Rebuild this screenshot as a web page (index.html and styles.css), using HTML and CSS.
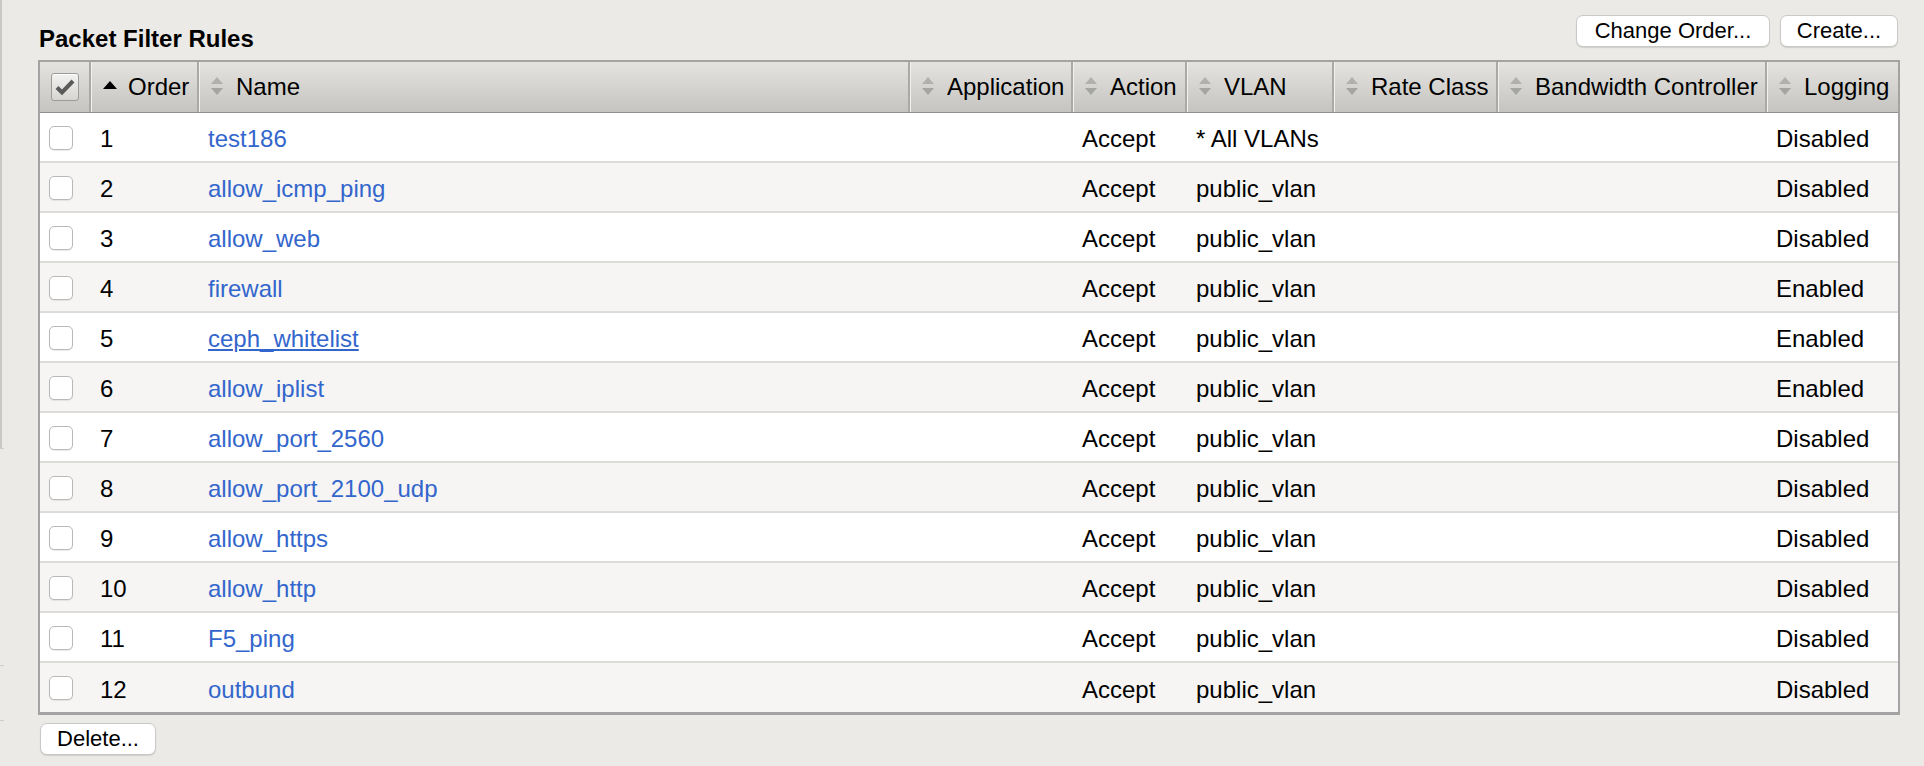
FILE: index.html
```html
<!DOCTYPE html>
<html>
<head>
<meta charset="utf-8">
<link rel="stylesheet" href="styles.css">
</head>
<body>
<div class="page">
  <div class="topbar">
    <h1 class="title">Packet Filter Rules</h1>
    <div class="actions">
      <button class="btn btn-order">Change Order...</button>
      <button class="btn btn-create">Create...</button>
    </div>
  </div>
  <div class="grid">
    <div class="row head">
      <div class="hc hc-chk"><span class="hbox"><svg width="20" height="18" viewBox="0 0 20 18"><path d="M2 9.5 L7 14.5 L18 3" fill="none" stroke="#5a5a5a" stroke-width="4" stroke-linejoin="miter"/></svg></span></div>
      <div class="hc"><span class="asc"></span><span>Order</span></div>
      <div class="hc"><span class="sort"></span><span>Name</span></div>
      <div class="hc"><span class="sort"></span><span>Application</span></div>
      <div class="hc"><span class="sort"></span><span>Action</span></div>
      <div class="hc"><span class="sort"></span><span>VLAN</span></div>
      <div class="hc"><span class="sort"></span><span>Rate Class</span></div>
      <div class="hc"><span class="sort"></span><span>Bandwidth Controller</span></div>
      <div class="hc hc-last"><span class="sort"></span><span>Logging</span></div>
    </div>
    <div class="row"><div class="c"><span class="cb"></span></div><div class="c">1</div><div class="c"><a class="lnk">test186</a></div><div class="c"></div><div class="c">Accept</div><div class="c">* All VLANs</div><div class="c"></div><div class="c"></div><div class="c">Disabled</div></div>
    <div class="row alt"><div class="c"><span class="cb"></span></div><div class="c">2</div><div class="c"><a class="lnk">allow_icmp_ping</a></div><div class="c"></div><div class="c">Accept</div><div class="c">public_vlan</div><div class="c"></div><div class="c"></div><div class="c">Disabled</div></div>
    <div class="row"><div class="c"><span class="cb"></span></div><div class="c">3</div><div class="c"><a class="lnk">allow_web</a></div><div class="c"></div><div class="c">Accept</div><div class="c">public_vlan</div><div class="c"></div><div class="c"></div><div class="c">Disabled</div></div>
    <div class="row alt"><div class="c"><span class="cb"></span></div><div class="c">4</div><div class="c"><a class="lnk">firewall</a></div><div class="c"></div><div class="c">Accept</div><div class="c">public_vlan</div><div class="c"></div><div class="c"></div><div class="c">Enabled</div></div>
    <div class="row"><div class="c"><span class="cb"></span></div><div class="c">5</div><div class="c"><a class="lnk hover">ceph_whitelist</a></div><div class="c"></div><div class="c">Accept</div><div class="c">public_vlan</div><div class="c"></div><div class="c"></div><div class="c">Enabled</div></div>
    <div class="row alt"><div class="c"><span class="cb"></span></div><div class="c">6</div><div class="c"><a class="lnk">allow_iplist</a></div><div class="c"></div><div class="c">Accept</div><div class="c">public_vlan</div><div class="c"></div><div class="c"></div><div class="c">Enabled</div></div>
    <div class="row"><div class="c"><span class="cb"></span></div><div class="c">7</div><div class="c"><a class="lnk">allow_port_2560</a></div><div class="c"></div><div class="c">Accept</div><div class="c">public_vlan</div><div class="c"></div><div class="c"></div><div class="c">Disabled</div></div>
    <div class="row alt"><div class="c"><span class="cb"></span></div><div class="c">8</div><div class="c"><a class="lnk">allow_port_2100_udp</a></div><div class="c"></div><div class="c">Accept</div><div class="c">public_vlan</div><div class="c"></div><div class="c"></div><div class="c">Disabled</div></div>
    <div class="row"><div class="c"><span class="cb"></span></div><div class="c">9</div><div class="c"><a class="lnk">allow_https</a></div><div class="c"></div><div class="c">Accept</div><div class="c">public_vlan</div><div class="c"></div><div class="c"></div><div class="c">Disabled</div></div>
    <div class="row alt"><div class="c"><span class="cb"></span></div><div class="c">10</div><div class="c"><a class="lnk">allow_http</a></div><div class="c"></div><div class="c">Accept</div><div class="c">public_vlan</div><div class="c"></div><div class="c"></div><div class="c">Disabled</div></div>
    <div class="row"><div class="c"><span class="cb"></span></div><div class="c">11</div><div class="c"><a class="lnk">F5_ping</a></div><div class="c"></div><div class="c">Accept</div><div class="c">public_vlan</div><div class="c"></div><div class="c"></div><div class="c">Disabled</div></div>
    <div class="row alt last"><div class="c"><span class="cb"></span></div><div class="c">12</div><div class="c"><a class="lnk">outbund</a></div><div class="c"></div><div class="c">Accept</div><div class="c">public_vlan</div><div class="c"></div><div class="c"></div><div class="c">Disabled</div></div>
  </div>
  <div class="bottombar">
    <button class="btn btn-delete">Delete...</button>
  </div>
</div>
</body>
</html>
```

FILE: styles.css
```css
html, body {
  margin: 0;
  padding: 0;
}
body {
  font-family: "Liberation Sans", Arial, Helvetica, sans-serif;
  color: #000;
  width: 1924px;
  height: 766px;
  overflow: hidden;
  background:
    linear-gradient(#c9c8c4, #c9c8c4) 0 0 / 2px 448px no-repeat,
    linear-gradient(#cfcecb, #cfcecb) 0 448px / 4px 1px no-repeat,
    linear-gradient(#cfcecb, #cfcecb) 0 665px / 4px 1px no-repeat,
    linear-gradient(#cfcecb, #cfcecb) 0 720px / 4px 1px no-repeat,
    #ebeae6;
}
.page {
  padding: 0 24px 0 38px;
}
.topbar {
  height: 60px;
  display: flex;
  justify-content: space-between;
}
.title {
  margin: 0 0 7px 1px;
  align-self: flex-end;
  font-size: 24px;
  line-height: 28px;
  font-weight: bold;
}
.actions {
  display: flex;
  gap: 10px;
  margin-top: 15px;
  align-self: flex-start;
  margin-right: 2px;
}
.btn {
  font-family: "Liberation Sans", Arial, sans-serif;
  font-size: 22px;
  height: 32px;
  line-height: 30px;
  padding: 0;
  background: #fff;
  color: #000;
  border: 1px solid #c9c9c7;
  border-radius: 7px;
  box-shadow: 0 1px 1px rgba(0,0,0,0.12);
  text-align: center;
}
.btn-order { width: 194px; }
.btn-create { width: 118px; }
.btn-delete { width: 116px; margin-left: 2px; }

.grid {
  border: 2px solid #a3a3a3;
  border-bottom-width: 3px;
  background: #fff;
}
.row {
  display: grid;
  grid-template-columns: 51px 108px 711px 163px 114px 147px 164px 269px 131px;
  height: 48px;
  border-bottom: 2px solid #dddcd9;
  background: #fff;
  font-size: 24px;
}
.row.alt { background: #f6f5f3; }
.row.last { border-bottom: 0; height: 49px; }
.c {
  display: flex;
  align-items: center;
  padding: 4px 0 0 9px;
  white-space: nowrap;
}
.head {
  height: 50px;
  border-bottom: 1px solid #8f8f8d;
  background: linear-gradient(#e4e3df, #c5c4c0);
}
.hc {
  display: flex;
  align-items: center;
  gap: 0;
  padding-left: 10px;
  border-left: 1px solid #f2f1ee;
  border-right: 2px solid #a9a9a7;
  white-space: nowrap;
}
.hc:first-child { border-left: 0; }
.hc-last { border-right: 0; }
.hc-chk { padding-left: 11px; }
.hbox {
  width: 26px;
  height: 26px;
  border: 1px solid #9c9c9a;
  border-radius: 3px;
  background: linear-gradient(#f2f2f0, #d6d5d2);
  display: flex;
  align-items: center;
  justify-content: center;
  box-shadow: inset 0 1px 0 #fff;
}
.asc {
  width: 0;
  height: 0;
  border-left: 7px solid transparent;
  border-right: 7px solid transparent;
  border-bottom: 8px solid #000;
  margin: 0 11px 4px 1px;
}
.sort {
  position: relative;
  width: 12px;
  height: 18px;
  margin: 0 13px 2px 1px;
}
.sort::before, .sort::after {
  content: "";
  position: absolute;
  left: 0;
  width: 0;
  height: 0;
  border-left: 6px solid transparent;
  border-right: 6px solid transparent;
}
.sort::before {
  top: 0;
  border-bottom: 7px solid #b0b0ae;
}
.sort::after {
  bottom: 0;
  border-top: 7px solid #a4a4a2;
}
.cb {
  width: 22px;
  height: 22px;
  border: 1px solid #b9b9b7;
  border-radius: 5px;
  background: #fff;
  box-shadow: 0 1px 1px rgba(0,0,0,0.08);
  margin: -3px 0 0 0;
}
.lnk {
  color: #3366cc;
  text-decoration: none;
}
.lnk.hover { text-decoration: underline; }
.bottombar {
  padding-top: 8px;
}
```
